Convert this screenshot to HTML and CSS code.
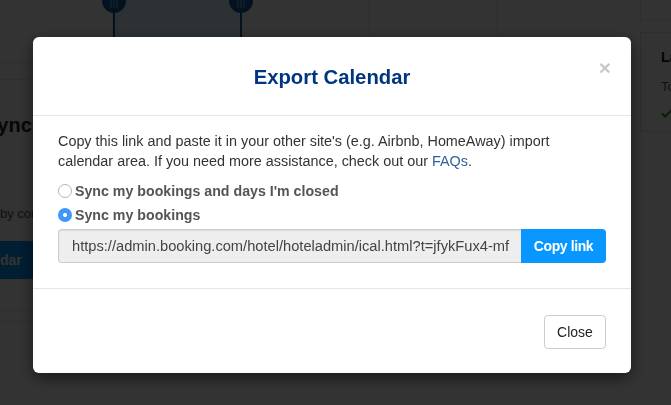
FILE: index.html
```html
<!DOCTYPE html>
<html lang="en">
<head>
<meta charset="utf-8">
<title>Export Calendar</title>
<link rel="stylesheet" href="styles.css">
</head>
<body>
<div class="page">
  <main class="main">
    <div class="calendar">
      <div class="cell"></div>
      <div class="cell selected">
        <svg class="pin pin-start" width="26" height="38" viewBox="0 0 26 38"><path class="pin-fill" d="M1 0H25V1A12 12 0 0 1 14 12.900V38H12V12.900A12 12 0 0 1 1 1Z"/><path class="pin-lines" d="M10 0V8M13 0V8M16 0V8"/></svg>
        <svg class="pin pin-end" width="26" height="38" viewBox="0 0 26 38"><path class="pin-fill" d="M1 0H25V1A12 12 0 0 1 14 12.900V38H12V12.900A12 12 0 0 1 1 1Z"/><path class="pin-lines" d="M10 0V8M13 0V8M16 0V8"/></svg>
      </div>
      <div class="cell"></div>
      <div class="cell"></div>
    </div>
    <div class="strip"></div>
    <div class="sync">
      <h2 class="sync-title">Sync</h2>
      <p class="sync-text">by connecting</p>
      <div class="sync-button">dar</div>
    </div>
    <div class="strip-low"></div>
    <div class="strip-low"></div>
  </main>
  <aside class="side">
    <div class="panel panel-top"></div>
    <div class="panel">
      <h3 class="panel-title">Last</h3>
      <p class="panel-text">To</p>
      <svg class="tick" width="12" height="10" viewBox="0 0 12 10"><path d="M1 5.500L4.300 8.500L11 1.500" /></svg>
    </div>
  </aside>
</div>
<div class="backdrop"></div>
<div class="modal">
  <header class="modal-header">
    <h1 class="modal-title">Export Calendar</h1>
    <button class="modal-x" type="button">×</button>
  </header>
  <section class="modal-body">
    <p class="intro">Copy this link and paste it in your other site's (e.g. Airbnb, HomeAway) import calendar area. If you need more assistance, check out our <a class="faq" href="#">FAQs</a>.</p>
    <label class="choice"><input class="radio" type="radio" name="sync"><span>Sync my bookings and days I'm closed</span></label>
    <label class="choice"><input class="radio" type="radio" name="sync" checked><span>Sync my bookings</span></label>
    <div class="link-row">
      <div class="link-field">https://admin.booking.com/hotel/hoteladmin/ical.html?t=jfykFux4-mf</div>
      <button class="copy" type="button">Copy link</button>
    </div>
  </section>
  <footer class="modal-footer">
    <button class="close" type="button">Close</button>
  </footer>
</div>
</body>
</html>
```

FILE: styles.css
```css
* { box-sizing: border-box; }
html, body { margin: 0; height: 100%; overflow: hidden; }
body { background: #fff; font-family: "Liberation Sans", Arial, sans-serif; color: #333; }

.page { display: flex; width: 671px; height: 405px; overflow: hidden; }
.main { width: 625px; flex: none; }
.side { flex: 1; padding-left: 15px; }

.calendar { display: grid; grid-template-columns: 113px 128px 128px 128px 127px; height: 64px; border-bottom: 1px solid #f0f0f0; }
.cell { border-right: 1px solid #ececec; }
.selected { position: relative; background: #e3f2fc; border-right: 0; }
.pin { position: absolute; top: 0; }
.pin-start { left: -12px; }
.pin-end { right: -13px; }
.pin-fill { fill: #0b5a9e; }
.pin-lines { stroke: #e3f2fc; stroke-width: 1; opacity: .6; fill: none; }

.strip { height: 16px; border-bottom: 1px solid #ececec; }
.sync { overflow: hidden; height: 220px; }
.sync-title { margin: 33px 0 0 -16px; font-size: 20px; line-height: 24px; font-weight: 700; color: #222; white-space: nowrap; }
.sync-text { margin: 58px 0 0 0; padding: 0 0 9px; border-top: 1px solid #f2f2f2; font-size: 13px; line-height: 36px; color: #555; white-space: nowrap; }
.sync-button { margin: 0; width: 640px; height: 38px; background: #0896ff; color: #fff; font-size: 14px; font-weight: 700; line-height: 38px; white-space: nowrap; }
.strip-low { height: 11px; border-bottom: 1px solid #ececec; }

.panel { border: 1px solid #e6e6e6; border-right: 0; padding: 16px 0 0 20px; height: 100px; margin-top: 11px; }
.panel-top { height: 21px; margin-top: 0; border-top: 0; }
.panel-title { margin: 0; font-size: 14px; line-height: 16px; font-weight: 700; color: #111; }
.panel-text { margin: 14px 0 13px; font-size: 13px; line-height: 16px; color: #555; }
.tick { display: block; }
.tick path { fill: none; stroke: #2aa12a; stroke-width: 2.200; }

.backdrop { position: fixed; inset: 0; background: rgba(0, 0, 0, .8); }

.modal { position: fixed; left: 33px; top: 37px; width: 598px; height: 336px; background: #fff; border-radius: 6px; box-shadow: 0 5px 15px rgba(0, 0, 0, .5); display: flex; flex-direction: column; }
.modal-header { position: relative; height: 79px; border-bottom: 1px solid #e5e5e5; display: flex; align-items: center; justify-content: center; }
.modal-title { margin: 0; padding-top: 1px; font-size: 20.300px; line-height: 24px; font-weight: 700; color: #003580; }
.modal-x { position: absolute; right: 20px; top: 20px; padding: 0; border: 0; background: none; font-family: inherit; font-size: 21px; line-height: 21px; font-weight: 700; color: #c9c9c9; }

.modal-body { height: 173px; padding: 15px 25px 0; border-bottom: 1px solid #e5e5e5; }
.intro { margin: 0 0 8px; font-size: 14.380px; line-height: 20px; color: #333; }
.faq { color: #2f6299; text-decoration: none; }
.choice { display: flex; align-items: center; height: 24px; font-size: 14.200px; font-weight: 700; color: #555; }
.radio { appearance: none; flex: none; width: 14px; height: 14px; margin: 0 3px 0 0; border: 1px solid #b5b5b5; border-radius: 50%; background: #fff; }
.radio:checked { border: 0; background: radial-gradient(circle, #fff 0 1.700px, #3f96fb 2.300px); }

.link-row { display: flex; height: 34px; margin-top: 2px; }
.link-field { flex: 1; padding: 0 13px; background: #eee; border: 1px solid #ccc; border-right: 0; border-radius: 4px 0 0 4px; font-size: 14.670px; line-height: 32px; color: #444; white-space: nowrap; overflow: hidden; box-shadow: inset 0 1px 1px rgba(0, 0, 0, .075); }
.copy { flex: none; width: 85px; padding: 0; border: 0; border-radius: 0 4px 4px 0; background: #0896ff; color: #fff; font-family: inherit; font-size: 14px; font-weight: 700; letter-spacing: -.4px; }

.modal-footer { flex: 1; display: flex; justify-content: flex-end; align-items: flex-start; padding: 26px 25px 0; }
.close { width: 62px; height: 34px; padding: 0; border: 1px solid #ccc; border-radius: 4px; background: #fff; color: #222; font-family: inherit; font-size: 14px; }
```
